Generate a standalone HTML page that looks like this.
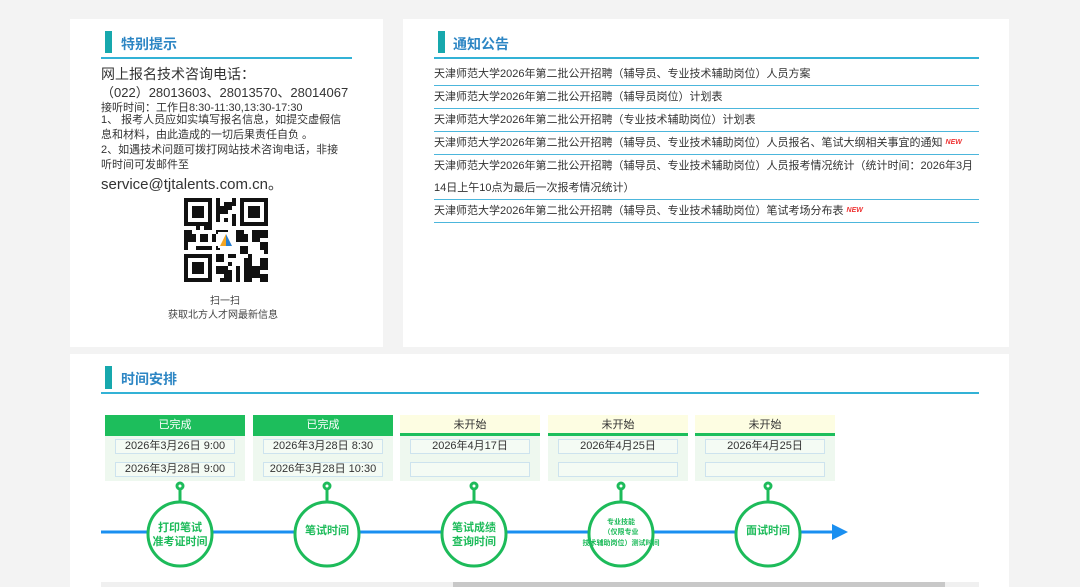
<!DOCTYPE html>
<html><head><meta charset="utf-8"><style>
*{margin:0;padding:0;box-sizing:border-box}
body{width:1080px;height:587px;overflow:hidden;background:#f3f3f3;font-family:"Liberation Sans","Noto Sans CJK SC",sans-serif;color:#333;position:relative}
.p{position:absolute;background:#fff}
.bar{position:absolute;width:7px;height:22px;background:#17a8ad}
.ttl{position:absolute;font-size:14px;font-weight:bold;color:#2d86c4}
.ul{position:absolute;height:2px;background:#32b2d6}
.t{position:absolute;white-space:nowrap}
.row{position:absolute;left:434px;width:545px;font-size:11px;color:#333;border-bottom:1px solid #4cb6dc;line-height:22px}
.box{position:absolute;top:415px;width:140px;height:66px;background:#eef8ef}
.hd{height:21px;font-size:11px;text-align:center;line-height:20px}
.done{background:#1dbe5c;color:#fff}
.ns{background:#fdfde2;color:#333;border-bottom:3px solid #1dbe5c}
.d{position:absolute;left:10px;width:120px;height:15px;border:1px solid #cde3ee;background:#f4fbf4;font-size:11px;text-align:center;line-height:13px;color:#333}
.new{font-size:7px;color:#e33;font-weight:bold;font-style:italic;vertical-align:top}
</style></head><body>
<div class="p" style="left:70px;top:19px;width:313px;height:328px"></div>
<div class="p" style="left:403px;top:19px;width:606px;height:328px"></div>
<div class="p" style="left:70px;top:354px;width:939px;height:233px"></div>

<div class="bar" style="left:105px;top:31px"></div>
<div class="ttl" style="left:121px;top:34px">特别提示</div>
<div class="ul" style="left:101px;top:57px;width:251px"></div>
<div class="t" style="left:101px;top:64px;font-size:14px">网上报名技术咨询电话：</div>
<div class="t" style="left:101px;top:82px;font-size:13px">（022）28013603、28013570、28014067</div>
<div class="t" style="left:101px;top:99px;font-size:11px">接听时间：工作日8:30-11:30,13:30-17:30</div>
<div class="t" style="left:101px;top:113px;font-size:11px;line-height:15px;white-space:normal;width:247px">1、 报考人员应如实填写报名信息，如提交虚假信息和材料，由此造成的一切后果责任自负 。<br>2、如遇技术问题可拨打网站技术咨询电话，非接听时间可发邮件至</div>
<div class="t" style="left:101px;top:173px;font-size:15px">service@tjtalents.com.cn。</div>
<svg style="position:absolute;left:184px;top:198px" width="84" height="84" viewBox="0 0 21 21" shape-rendering="crispEdges">
<rect width="21" height="21" fill="#fff"/>
<g fill="#111">
<path d="M0 0h7v7h-7zM14 0h7v7h-7zM0 14h7v7h-7z"/>
</g>
<g fill="#fff"><path d="M1 1h5v5h-5zM15 1h5v5h-5zM1 15h5v5h-5z"/></g>
<g fill="#111"><path d="M2 2h3v3h-3zM16 2h3v3h-3zM2 16h3v3h-3z"/>
<path d="M8 0h1v2h1v-1h2v2h-1v1h-2v2h-1zM12 4h1v3h-1zM10 5h1v1h-1zM12 0h1v2h-1zM8 8h3v1h-3zM0 8h2v1h1v2h-2v1h-1zM4 9h2v2h-2zM3 7h1v1h-1zM5 7h2v1h-2zM13 8h2v1h1v2h-3zM17 8h4v2h-2v1h-2zM19 11h2v3h-1v-1h-1zM0 12h1v1h-1zM3 12h4v1h-4zM14 12h2v2h-2zM16 14h1v1h-1zM8 14h2v2h-2zM11 14h2v1h-2zM15 15h2v2h2v-2h2v3h-2v2h-2v1h-2zM8 17h3v1h1v3h-2v-2h-2zM13 17h1v4h-1zM19 19h2v2h-2zM10 11h1v1h-1zM7 9h1v2h-1zM8 12h1v1h-1zM11 16h1v1h-1zM9 20h1v1h-1z"/></g>
<rect x="8.5" y="8.5" width="4" height="4" fill="#fff"/>
<path d="M10.5 9l1.5 3h-3z" fill="#2a7fd0"/><path d="M10.5 9l-1.5 3h1.5z" fill="#f5a623"/>
</svg>
<div class="t" style="left:210px;top:292px;font-size:10px;color:#444">扫一扫</div>
<div class="t" style="left:168px;top:306px;font-size:10px;color:#444">获取北方人才网最新信息</div>

<div class="bar" style="left:438px;top:31px"></div>
<div class="ttl" style="left:453px;top:34px">通知公告</div>
<div class="ul" style="left:434px;top:57px;width:545px"></div>
<div class="row" style="top:63px">天津师范大学2026年第二批公开招聘（辅导员、专业技术辅助岗位）人员方案</div>
<div class="row" style="top:86px">天津师范大学2026年第二批公开招聘（辅导员岗位）计划表</div>
<div class="row" style="top:109px">天津师范大学2026年第二批公开招聘（专业技术辅助岗位）计划表</div>
<div class="row" style="top:132px">天津师范大学2026年第二批公开招聘（辅导员、专业技术辅助岗位）人员报名、笔试大纲相关事宜的通知 <span class="new">NEW</span></div>
<div class="row" style="top:155px">天津师范大学2026年第二批公开招聘（辅导员、专业技术辅助岗位）人员报考情况统计（统计时间：2026年3月<br>14日上午10点为最后一次报考情况统计）</div>
<div class="row" style="top:200px">天津师范大学2026年第二批公开招聘（辅导员、专业技术辅助岗位）笔试考场分布表 <span class="new">NEW</span></div>

<div class="bar" style="left:105px;top:366px;height:23px"></div>
<div class="ttl" style="left:121px;top:369px">时间安排</div>
<div class="ul" style="left:101px;top:392px;width:878px"></div>

<div class="box" style="left:105px"><div class="hd done">已完成</div><div class="d" style="top:24px">2026年3月26日 9:00</div><div class="d" style="top:47px">2026年3月28日 9:00</div></div>
<div class="box" style="left:253px"><div class="hd done">已完成</div><div class="d" style="top:24px">2026年3月28日 8:30</div><div class="d" style="top:47px">2026年3月28日 10:30</div></div>
<div class="box" style="left:400px"><div class="hd ns">未开始</div><div class="d" style="top:24px">2026年4月17日</div><div class="d" style="top:47px"></div></div>
<div class="box" style="left:548px"><div class="hd ns">未开始</div><div class="d" style="top:24px">2026年4月25日</div><div class="d" style="top:47px"></div></div>
<div class="box" style="left:695px"><div class="hd ns">未开始</div><div class="d" style="top:24px">2026年4月25日</div><div class="d" style="top:47px"></div></div>

<svg style="position:absolute;left:0;top:0" width="1080" height="587">
<line x1="101" y1="532" x2="835" y2="532" stroke="#1a8ff0" stroke-width="3"/>
<path d="M832 524l16 8l-16 8z" fill="#1a8ff0"/>
<g fill="#fff" stroke="#1dbb5a" stroke-width="3">
<g transform="translate(180,0)"><line x1="0" y1="489" x2="0" y2="502"/><circle cx="0" cy="486" r="3"/><circle cx="0" cy="534" r="32"/></g>
<g transform="translate(327,0)"><line x1="0" y1="489" x2="0" y2="502"/><circle cx="0" cy="486" r="3"/><circle cx="0" cy="534" r="32"/></g>
<g transform="translate(474,0)"><line x1="0" y1="489" x2="0" y2="502"/><circle cx="0" cy="486" r="3"/><circle cx="0" cy="534" r="32"/></g>
<g transform="translate(621,0)"><line x1="0" y1="489" x2="0" y2="502"/><circle cx="0" cy="486" r="3"/><circle cx="0" cy="534" r="32"/></g>
<g transform="translate(768,0)"><line x1="0" y1="489" x2="0" y2="502"/><circle cx="0" cy="486" r="3"/><circle cx="0" cy="534" r="32"/></g>
</g>
<g fill="#1dbb5a" font-family="Liberation Sans,Noto Sans CJK SC,sans-serif" font-weight="bold" text-anchor="middle">
<text x="180" y="531" font-size="11">打印笔试</text><text x="180" y="545" font-size="11">准考证时间</text>
<text x="327" y="534" font-size="11">笔试时间</text>
<text x="474" y="531" font-size="11">笔试成绩</text><text x="474" y="545" font-size="11">查询时间</text>
<text x="621" y="524" font-size="7">专业技能</text><text x="621" y="534" font-size="7">（仅限专业</text><text x="621" y="545" font-size="7">技术辅助岗位）测试时间</text>
<text x="768" y="534" font-size="11">面试时间</text>
</g>
<rect x="101" y="582" width="878" height="5" fill="#f0f0f0"/>
<rect x="453" y="582" width="492" height="5" fill="#c8c8c8"/>
</svg>
</body></html>
